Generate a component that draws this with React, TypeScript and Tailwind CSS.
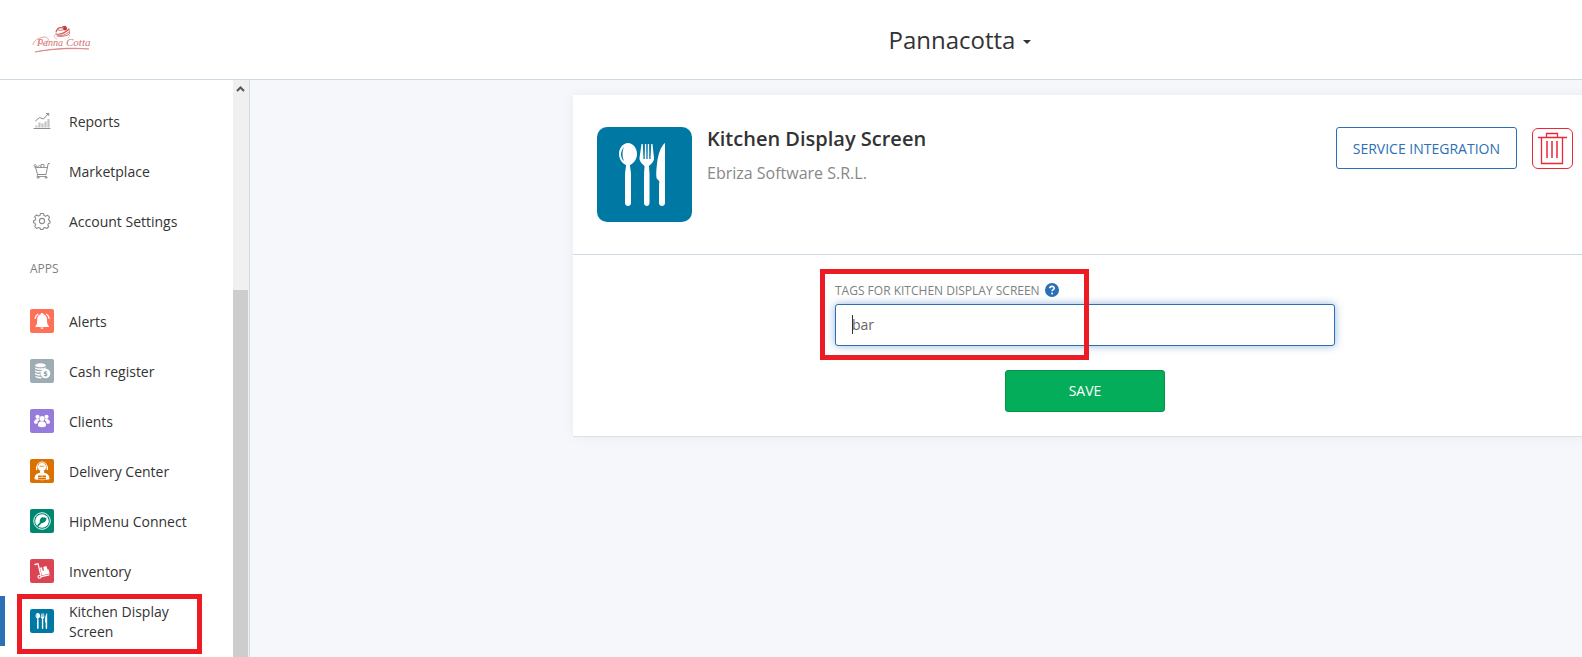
import { useState } from 'react'
import type { ReactNode } from 'react'

interface NavItem {
  label: string
  icon: ReactNode
  active?: boolean
}

function PannaCottaLogo() {
  return (
    <svg width="60" height="30" viewBox="0 0 60 30" fill="none" aria-label="Panna Cotta">
      <g stroke="#cf5555" strokeLinecap="round">
        <path d="M24 7c1-3 3-5 6-4 1-2 3-2 4-1M24 9c5 1 9-1 13-5" strokeWidth="1.2" />
        <path d="M26 5c3 1 5 0 7-1M25 11c4 0 9-1 12-4M37 5c1 2 1 4-1 5-3 1-7 2-10 1" strokeWidth="0.8" />
        <path d="M24 9c-3 2-2 4 1 5M36 9c2 1 2 3 0 4" strokeWidth="0.6" opacity="0.6" />
      </g>
      <circle cx="33" cy="3.500" r="2" fill="#c93636" />
      <path d="M1 20c0-4 6-8 12-8 6 1 3 7-3 7-4 0-4-3-1-5" stroke="#d98080" strokeWidth="0.7" />
      <text x="5" y="21" fill="#d47070" className="font-['Liberation_Serif',serif] text-[10px] italic">
        Panna
      </text>
      <text x="34" y="21" fill="#d47070" className="font-['Liberation_Serif',serif] text-[11px] italic">
        Cotta
      </text>
      <path d="M3 27c14-3 34-5 54-3-20-1-38 0-54 3z" fill="#d98080" stroke="#d98080" strokeWidth="0.7" />
    </svg>
  )
}

function Utensils() {
  return (
    <g fill="#fff">
      <path d="M31 16c5 0 9 5 9 11 0 5-3 9-7 11 0 3 1 6 1 10v28c0 4-6 4-6 0V48c0-4 1-7 1-10-4-2-7-6-7-11 0-6 4-11 9-11z" />
      <path d="M44.500 17h1.300l.7 15h1.200l.2-15h1.300l.2 15h1.200l.2-15h1.300l.2 15h1.200l.7-15h1.300L57 31c0 4-3 6-5 8 0 3 .5 5 .5 8v29c0 4-5.500 4-5.500 0V47c0-3 .5-5 .5-8-2-2-5-4-5-8z" />
      <path d="M68 16v60c0 4-6 4-6 0V57c1-2 0-4-2-5-1-1-1-8 0-15 1-10 4-18 8-21z" />
      <path d="M27 20c-4 4-4 11 0 14-2-4-2-10 0-14z" fill="#0078a4" />
    </g>
  )
}

function Tile({ color, children }: { color: string; children: ReactNode }) {
  return (
    <svg width="24" height="24" viewBox="0 0 24 24" fill="none" className="shrink-0" aria-hidden="true">
      <rect width="24" height="24" rx="2" fill={color} />
      {children}
    </svg>
  )
}

function OutlineIcon({ children }: { children: ReactNode }) {
  return (
    <svg
      width="24"
      height="24"
      viewBox="0 0 24 24"
      fill="none"
      stroke="#8c8c8c"
      strokeLinecap="round"
      strokeLinejoin="round"
      className="shrink-0"
      aria-hidden="true"
    >
      {children}
    </svg>
  )
}

const mainItems: NavItem[] = [
  {
    label: 'Reports',
    icon: (
      <OutlineIcon>
        <path d="M4 19.500h16" strokeWidth="1" />
        <path d="M6.500 18.500v-2M9.500 18.500v-5M12.500 18.500v-4M15.500 18.500v-6M18.500 18.500V10" strokeWidth="2.200" strokeLinecap="butt" stroke="#c4c4c4" />
        <path d="M5.500 12l4-3.500 4 1.500 5-5.500M16.500 4.500h2.200v2" strokeWidth="1" />
      </OutlineIcon>
    ),
  },
  {
    label: 'Marketplace',
    icon: (
      <OutlineIcon>
        <path d="M19.500 4.500h-1.300L16 15.500H7.500L5.500 8" strokeWidth="1" />
        <path d="M5 8.500h12.300M7.500 15.500l-.5 2h9.500" strokeWidth="0.900" />
        <path d="M7 8c0-2.500-3-3-3-1.500s1.500 1 1.500 1M8 8c0-2 3-2 3 0M11 8V5.500h3V8" strokeWidth="0.900" />
        <circle cx="8" cy="18.500" r="0.900" strokeWidth="0.900" />
        <circle cx="16" cy="18.500" r="0.900" strokeWidth="0.900" />
      </OutlineIcon>
    ),
  },
  {
    label: 'Account Settings',
    icon: (
      <OutlineIcon>
        <path
          d="M10.500 4.500h3l.5 2 1.500.7 2-1 2 2-1 2 .6 1.300.9.500v2l-1.500.5-.7 1.500 1 1.500-2 2-2-1-1.300.5-.5 1.500h-2.500l-.5-1.500-1.500-.5-2 1-1.800-2 1-1.700-.7-1.500-1.500-.5v-2l1.500-.6.7-1.500-1-2 1.800-1.800 2 1 1.500-.6z"
          strokeWidth="1.100"
        />
        <circle cx="12" cy="12" r="2.600" strokeWidth="1.100" />
      </OutlineIcon>
    ),
  },
]

const appItems: NavItem[] = [
  {
    label: 'Alerts',
    icon: (
      <Tile color="#ff7058">
        <path d="M12 4c.8 0 1.300.6 1.300 1.200 2.500.8 3.700 2.800 3.700 5 0 4 .3 5 2 7v.8H5.500v-.8c1.500-2 1.700-3 1.700-7 0-2.200 1-4.200 3.500-5C10.700 4.600 11.200 4 12 4z" fill="#fff" />
        <path d="M10.500 18.500h3c0 1.800-3 1.800-3 0z" fill="#fff" />
        <path d="M7.800 5.200C6.300 6.200 5.300 7.700 5.200 9.500M16.500 5.200c1.500 1 2.500 2.500 2.600 4.300" stroke="#fff" strokeWidth="1.200" strokeLinecap="round" />
      </Tile>
    ),
  },
  {
    label: 'Cash register',
    icon: (
      <Tile color="#9eadb4">
        <ellipse cx="10.500" cy="6.300" rx="5.500" ry="2" fill="#fff" />
        <path
          d="M5 8.200c2 1.600 9 1.600 11 0v1.400c-2 1.800-9 1.800-11 0zM5 11c2 1.500 6 1.500 7 1.200l-1 1.400c-2 0-5 0-6-1.400zM5 13.800c1 1 4 1.400 5.500 1.300v1.400c-2 0-5 0-5.500-1.500zM5.500 16.800c1.500 1 4 1.200 5.500 1.100l1 1.400c-3 .4-6-.3-6.500-1.300z"
          fill="#fff"
        />
        <circle cx="15.500" cy="14.500" r="4.800" fill="#fff" />
        <text x="15.500" y="17" textAnchor="middle" fill="#8a999f" className="font-['Open_Sans',sans-serif] text-[7px] font-bold">
          $
        </text>
      </Tile>
    ),
  },
  {
    label: 'Clients',
    icon: (
      <Tile color="#967adc">
        <g fill="#fff">
          <circle cx="7.500" cy="7.800" r="2.100" />
          <circle cx="16.500" cy="7.800" r="2.100" />
          <path d="M4 14c0-3 1.500-4 3.500-4 1 0 1.500.3 2 1-1.500 1-2 2-2.200 3.800C5.500 14.800 4 14.500 4 14zM20 14c0-3-1.500-4-3.500-4-1 0-1.500.3-2 1 1.500 1 2 2 2.200 3.800 1.800 0 3.300-.3 3.300-.8z" />
          <circle cx="12" cy="9.500" r="2.500" />
          <path d="M8 16.500c0-3 1.500-4.200 4-4.200s4 1.200 4 4.200c0 2.300-8 2.300-8 0z" />
        </g>
      </Tile>
    ),
  },
  {
    label: 'Delivery Center',
    icon: (
      <Tile color="#da7100">
        <circle cx="12" cy="8" r="4" fill="#fff" />
        <path d="M7 9c-1-8 11-8 10 0" stroke="#fff" strokeWidth="1" />
        <path d="M9.500 7c2 .5 4 .5 5 0" stroke="#da7100" strokeWidth="0.800" />
        <path d="M6 7.500h1.300v3.500H6zM16.700 7.500H18V11h-1.300z" fill="#fff" />
        <path d="M4.500 20c0-4 2-5.500 5.500-6.300v-2h4v2c3.500.8 5.500 2.300 5.500 6.300-2 1.500-13 1.500-15 0z" fill="#fff" />
        <path d="M8 16.500h8v4H8z" fill="#da7100" />
        <path d="M12 16.500v1.500M8 18.500h8" stroke="#fff" strokeWidth="0.600" />
      </Tile>
    ),
  },
  {
    label: 'HipMenu Connect',
    icon: (
      <Tile color="#008772">
        <circle cx="12" cy="12" r="8.300" stroke="#fff" strokeWidth="0.900" />
        <circle cx="12" cy="12" r="6.800" fill="#fff" />
        <path d="M7 16.500l2.800-3c-.5-2.500.7-4.700 3-5.500l.5.800 1.200-.9.500 1.100 1.200-.4c.8 2.400-1 5.600-4.700 5.700l-3.200 3.200z" fill="#008772" />
      </Tile>
    ),
  },
  {
    label: 'Inventory',
    icon: (
      <Tile color="#da4453">
        <path d="M5 5.500l3-.8 2.800 11.300M10.500 17.800l8.500-2" stroke="#fff" strokeWidth="1.300" strokeLinecap="round" />
        <circle cx="9.500" cy="17.800" r="1.500" fill="#da4453" stroke="#fff" strokeWidth="1.100" />
        <path d="M10 8.800l1.800-.5 1 3.500 1.300-.4-1-3.500L16.500 7l1 3.400 1-.2 1.200 4.200-7.800 2.100z" fill="#fff" />
      </Tile>
    ),
  },
  {
    label: 'Kitchen Display Screen',
    active: true,
    icon: (
      <svg width="24" height="24" viewBox="0 0 95 95" className="shrink-0" aria-hidden="true">
        <rect width="95" height="95" rx="9" fill="#0078a4" />
        <Utensils />
      </svg>
    ),
  },
]

function SidebarLink({ item }: { item: NavItem }) {
  return (
    <li className="relative">
      <a href="#" className="flex h-[50px] items-center gap-[15px] pl-[30px] pr-10 text-sm text-[#333]">
        {item.icon}
        <span className="pt-[2px]">{item.label}</span>
      </a>
      {item.active && (
        <>
          <span className="absolute left-0 top-0 h-full w-[5px] bg-[#2b6fb5]" />
          <span className="pointer-events-none absolute -top-[2px] left-[17px] h-[60px] w-[185px] border-[5px] border-[#ed1c24]" />
        </>
      )}
    </li>
  )
}

function Sidebar() {
  return (
    <aside className="flex w-[250px] shrink-0 border-r border-[#cfdbe2] bg-white">
      <nav className="flex-1 pt-4">
        <ul>
          {mainItems.map((item) => (
            <SidebarLink key={item.label} item={item} />
          ))}
        </ul>
        <h2 className="flex h-[50px] items-center pb-1 pl-[30px] text-xs text-[#808080]">APPS</h2>
        <ul>
          {appItems.map((item) => (
            <SidebarLink key={item.label} item={item} />
          ))}
        </ul>
      </nav>

      {/* Scrollbar */}
      <div className="flex w-4 flex-col bg-[#f0f0f0]">
        <div className="flex h-[17px] w-[15px] justify-center pt-[6px]">
          <svg width="9" height="6" viewBox="0 0 9 6" fill="none" aria-hidden="true">
            <path d="M1 5l3.500-3.500L8 5" stroke="#555" strokeWidth="2" />
          </svg>
        </div>
        <div className="h-[193px]" />
        <div className="w-[15px] flex-1 bg-[#cdcdcd]" />
      </div>
    </aside>
  )
}

export default function App() {
  const [tags, setTags] = useState('bar')

  return (
    <div className="flex h-screen flex-col overflow-hidden bg-[#f5f7fb] font-['Open_Sans','Noto_Sans',sans-serif] text-[#333]">
      {/* Header */}
      <header className="flex h-20 shrink-0 items-center border-b border-[#cfdbe2] bg-white">
        <div className="w-[338px] pl-8">
          <PannaCottaLogo />
        </div>
        <div className="flex flex-1 justify-center">
          <button type="button" className="flex items-center gap-2 text-2xl">
            Pannacotta
            <span className="mt-1 border-x-4 border-t-4 border-x-transparent border-t-[#333]" />
          </button>
        </div>
      </header>

      <div className="flex min-h-0 flex-1">
        <Sidebar />

        <main className="flex-1 overflow-hidden pl-[323px] pt-[15px]">
          <section className="-mr-[15px] border-b border-[#dde1e5] bg-white shadow-[0_0_12px_rgba(0,0,0,0.05)]">
            {/* App details */}
            <div className="flex items-start border-b border-[#cfdbe2] px-6 py-8">
              <svg width="95" height="95" viewBox="0 0 95 95" className="shrink-0" aria-hidden="true">
                <rect width="95" height="95" rx="10" fill="#0078a4" />
                <Utensils />
              </svg>
              <div className="ml-[15px] flex-1">
                <h1 className="text-xl leading-6 font-semibold">Kitchen Display Screen</h1>
                <p className="mt-[10px] leading-6 text-[#888]">Ebriza Software S.R.L.</p>
              </div>
              <div className="flex items-end gap-[15px]">
                <button type="button" className="h-[42px] rounded-[3px] border border-[#2b6fb5] px-4 pt-[2px] text-sm text-[#2b6fb5]">
                  SERVICE INTEGRATION
                </button>
                <button
                  type="button"
                  aria-label="Delete"
                  className="flex h-[41px] w-[41px] items-center justify-center rounded-md border border-[#ed2737]"
                >
                  <svg width="31" height="33" viewBox="0 0 31 33" fill="none" stroke="#ed2737" aria-hidden="true">
                    <path d="M1 5.500h29M9.500 5V1.500h11V5M4.500 6v25.500h21V6" strokeWidth="1.300" />
                    <path d="M10 9v17M15 9v17M20 9v17" strokeWidth="1.500" />
                  </svg>
                </button>
              </div>
            </div>

            {/* Tags form */}
            <form className="mx-auto flex w-[500px] flex-col items-center py-6" onSubmit={(e) => e.preventDefault()}>
              <div className="relative w-full">
                <div className="flex h-[25px] items-start gap-[5px] pt-1 text-xs text-[#808080]">
                  <label htmlFor="tags">TAGS FOR KITCHEN DISPLAY SCREEN</label>
                  <svg width="14" height="14" viewBox="0 0 14 14" aria-hidden="true">
                    <circle cx="7" cy="7" r="7" fill="#2b6fb5" />
                    <path d="M4.800 5.300C4.800 2.700 9.200 2.700 9.200 5.200c0 1.500-2.100 1.500-2.100 3" fill="none" stroke="#fff" strokeWidth="1.600" />
                    <circle cx="7.100" cy="10.500" r="1" fill="#fff" />
                  </svg>
                </div>
                <input
                  id="tags"
                  type="text"
                  value={tags}
                  onChange={(e) => setTags(e.target.value)}
                  className="h-[42px] w-full rounded-[3px] border border-[#2b6fb5] bg-white px-4 pb-[2px] text-sm text-[#666] shadow-[0_0_8px_rgba(43,111,181,0.5)] outline-none"
                />
                {/* Text cursor */}
                <span className="absolute bottom-3 left-[17px] h-[19px] w-px bg-[#333]" />
                <span className="pointer-events-none absolute -left-[15px] -top-[10px] h-[91px] w-[269px] border-[5px] border-[#ed1c24]" />
              </div>
              <button
                type="submit"
                className="mt-6 h-[42px] w-40 rounded-[3px] border border-[#0a9149] bg-[#04ad59] text-sm text-white"
              >
                SAVE
              </button>
            </form>
          </section>
        </main>
      </div>
    </div>
  )
}
